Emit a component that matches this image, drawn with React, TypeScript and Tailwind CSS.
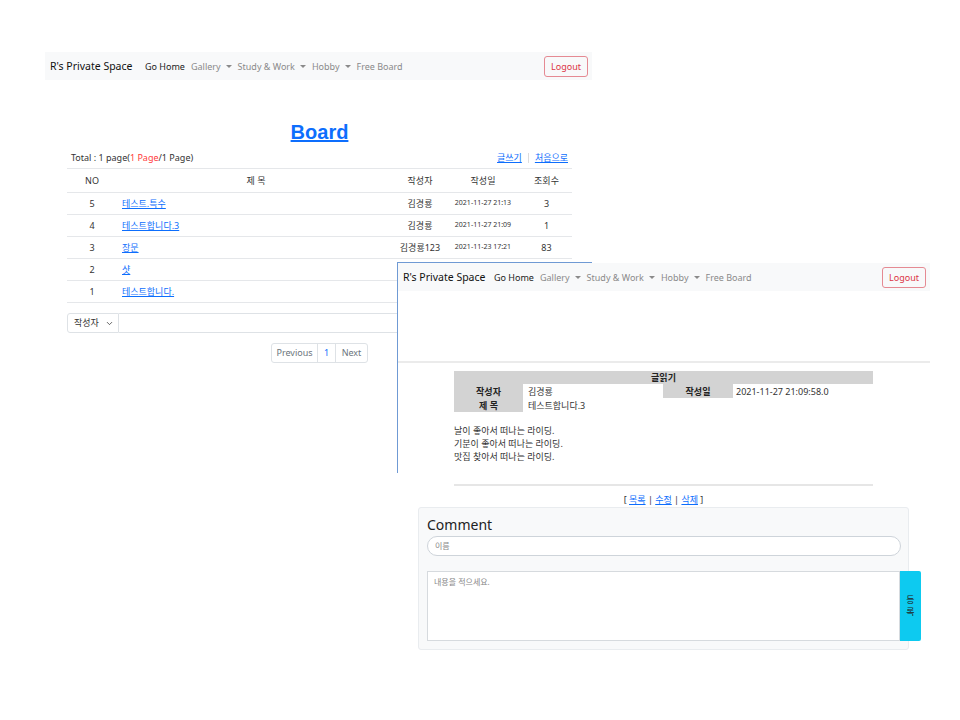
import React from "react";
import { ChevronDown } from "lucide-react";

const font = { fontFamily: '"Noto Sans", "Noto Sans CJK KR", sans-serif' };

function Caret() {
  return <span className="inline-block ml-[5px] w-0 h-0 border-x-[3px] border-x-transparent border-t-[3px] border-t-current align-middle" />;
}

function NavBar({ brandWidth }: { brandWidth: string }) {
  return (
    <div className="h-[28px] bg-[#f8f9fa] flex items-center pl-[5px] pr-[4px] text-[9px] leading-none">
      <span className={`text-[10.5px] text-[#111] whitespace-nowrap ${brandWidth}`}>R's Private Space</span>
      <div className="flex items-center">
        <span className="px-[3px] text-[#222]">Go Home</span>
        <span className="px-[3px] text-[#8a8a8a] flex items-center">Gallery<Caret /></span>
        <span className="px-[3px] text-[#8a8a8a] flex items-center">Study &amp; Work<Caret /></span>
        <span className="px-[3px] text-[#8a8a8a] flex items-center">Hobby<Caret /></span>
        <span className="px-[3px] text-[#8a8a8a]">Free Board</span>
      </div>
      <div className="ml-auto h-[21px] px-[6px] border border-[#e58a93] rounded-[3px] text-[#dc3545] text-[9px] flex items-center">Logout</div>
    </div>
  );
}

const rows = [
  { no: 5, title: "테스트.특수", author: "김경룡", date: "2021-11-27 21:13", views: 3 },
  { no: 4, title: "테스트합니다.3", author: "김경룡", date: "2021-11-27 21:09", views: 1 },
  { no: 3, title: "장문", author: "김경룡123", date: "2021-11-23 17:21", views: 83 },
  { no: 2, title: "샷", author: "", date: "", views: "" },
  { no: 1, title: "테스트합니다.", author: "", date: "", views: "" },
];

function Window1() {
  return (
    <div className="absolute left-[45px] top-[52px] w-[547px] bg-white">
      <NavBar brandWidth="w-[92px]" />
      <div className="pl-[22px] pr-[20px]">
        <div className="mt-[38px] h-[28px] flex items-center justify-center">
          <span className="text-[20px] font-bold text-[#0d6efd] underline" style={{ fontFamily: '"Liberation Sans", sans-serif' }}>Board</span>
        </div>
        <div className="mt-[5px] h-[14px] flex items-center text-[9px] text-[#333] pl-[4px] pr-[4px]">
          <span>Total : 1 page(<span className="text-[#ff3b3b]">1 Page</span>/1 Page)</span>
          <span className="ml-auto text-[#0d6efd] underline">글쓰기</span>
          <span className="mx-[6px] w-px h-[10px] bg-[#ddd]" />
          <span className="text-[#0d6efd] underline">처음으로</span>
        </div>
        <div className="mt-[3px] border-t border-[#e5e7ea] text-[9px] text-[#333]">
          <div className="h-[24px] flex items-center border-b border-[#e5e7ea]">
            <span className="w-[50px] text-center">NO</span>
            <span className="w-[278px] text-center">제 목</span>
            <span className="w-[50px] text-center">작성자</span>
            <span className="w-[76px] text-center">작성일</span>
            <span className="w-[51px] text-center">조회수</span>
          </div>
          {rows.map((r) => (
            <div key={r.no} className="h-[22px] flex items-center border-b border-[#e5e7ea]">
              <span className="w-[50px] text-center">{r.no}</span>
              <span className="w-[278px] pl-[5px]"><span className="text-[#0d6efd] underline">{r.title}</span></span>
              <span className="w-[50px] text-center whitespace-nowrap">{r.author}</span>
              <span className="w-[76px] text-center text-[7px] whitespace-nowrap">{r.date}</span>
              <span className="w-[51px] text-center">{r.views}</span>
            </div>
          ))}
        </div>
        <div className="mt-[10px] h-[20px] flex text-[9px] text-[#333]">
          <div className="w-[52px] border border-[#dee2e6] rounded-l-[3px] flex items-center pl-[6px] gap-[6px]">
            <span>작성자</span>
            <ChevronDown size={9} strokeWidth={2} />
          </div>
          <div className="flex-1 border border-l-0 border-[#dee2e6] rounded-r-[3px]" />
        </div>
        <div className="mt-[10px] flex justify-center">
          <div className="h-[20px] flex text-[9px] border border-[#dee2e6] rounded-[3px]">
            <span className="w-[46px] flex items-center justify-center text-[#6c757d] border-r border-[#dee2e6]">Previous</span>
            <span className="w-[18px] flex items-center justify-center text-[#0d6efd] border-r border-[#dee2e6]">1</span>
            <span className="w-[31px] flex items-center justify-center text-[#6c757d]">Next</span>
          </div>
        </div>
      </div>
    </div>
  );
}

function Window2() {
  return (
    <div className="absolute left-[397px] top-[262px] w-[533px] h-[398px] bg-white">
      <div className="pt-px pl-px">
        <NavBar brandWidth="w-[88px]" />
      </div>
      <div className="mt-[70px] h-[2px] bg-[#ebebeb]" />
      <div className="mx-auto mt-[8px] w-[419px] text-[9px] text-[#333] leading-none">
        <div className="h-[13px] bg-[#d3d3d3] flex items-center justify-center font-bold text-[#222]">글읽기</div>
        <div className="h-[14px] flex items-center">
          <span className="w-[69px] h-full bg-[#d3d3d3] flex items-center justify-center font-bold text-[#222]">작성자</span>
          <span className="w-[140px] pl-[5px]">김경룡</span>
          <span className="w-[70px] h-full bg-[#d3d3d3] flex items-center justify-center font-bold text-[#222]">작성일</span>
          <span className="pl-[3px]">2021-11-27 21:09:58.0</span>
        </div>
        <div className="h-[14px] flex items-center">
          <span className="w-[69px] h-full bg-[#d3d3d3] flex items-center justify-center font-bold text-[#222]">제 목</span>
          <span className="pl-[5px]">테스트합니다.3</span>
        </div>
        <div className="mt-[14px] flex flex-col gap-[3px] leading-[10px]">
          <span>날이 좋아서 떠나는 라이딩.</span>
          <span>기분이 좋아서 떠나는 라이딩.</span>
          <span>맛집 찾아서 떠나는 라이딩.</span>
        </div>
        <div className="mt-[22px] h-[2px] bg-[#e6e6e6]" />
        <div className="mt-[9px] text-center text-[#333]">
          [ <span className="text-[#0d6efd] underline">목록</span> | <span className="text-[#0d6efd] underline">수정</span> | <span className="text-[#0d6efd] underline">삭제</span> ]
        </div>
      </div>
      <div className="mx-auto mt-[3px] w-[491px] h-[143px] bg-[#f8f9fa] border border-[#e9ecef] rounded-[3px] pl-[8px] pt-[8px]">
        <div className="text-[14px] text-[#222] leading-[18px]">Comment</div>
        <div className="mt-[2px] h-[20px] w-[474px] bg-white border border-[#ced4da] rounded-full flex items-center pl-[7px] text-[8px] text-[#888]">이름</div>
        <div className="mt-[15px] flex h-[70px] w-[494px]">
          <div className="w-[473px] shrink-0 bg-white border border-[#d6dade] pl-[6px] pt-[4px] text-[8px] text-[#888]">내용을 적으세요.</div>
          <div className="w-[21px] shrink-0 bg-[#0dcaf0] rounded-r-[2px] flex flex-col items-center justify-center text-[9px] text-[#222] leading-[12px]">
            <span>등</span>
            <span>록</span>
          </div>
        </div>
      </div>
      <div className="absolute left-0 top-0 w-[195px] h-px bg-[#6f9ad4]" />
      <div className="absolute left-0 top-0 w-px h-[211px] bg-[#6f9ad4]" />
    </div>
  );
}

export default function App() {
  return (
    <div className="relative w-[960px] h-[720px] bg-white overflow-hidden" style={font}>
      <Window1 />
      <Window2 />
    </div>
  );
}
